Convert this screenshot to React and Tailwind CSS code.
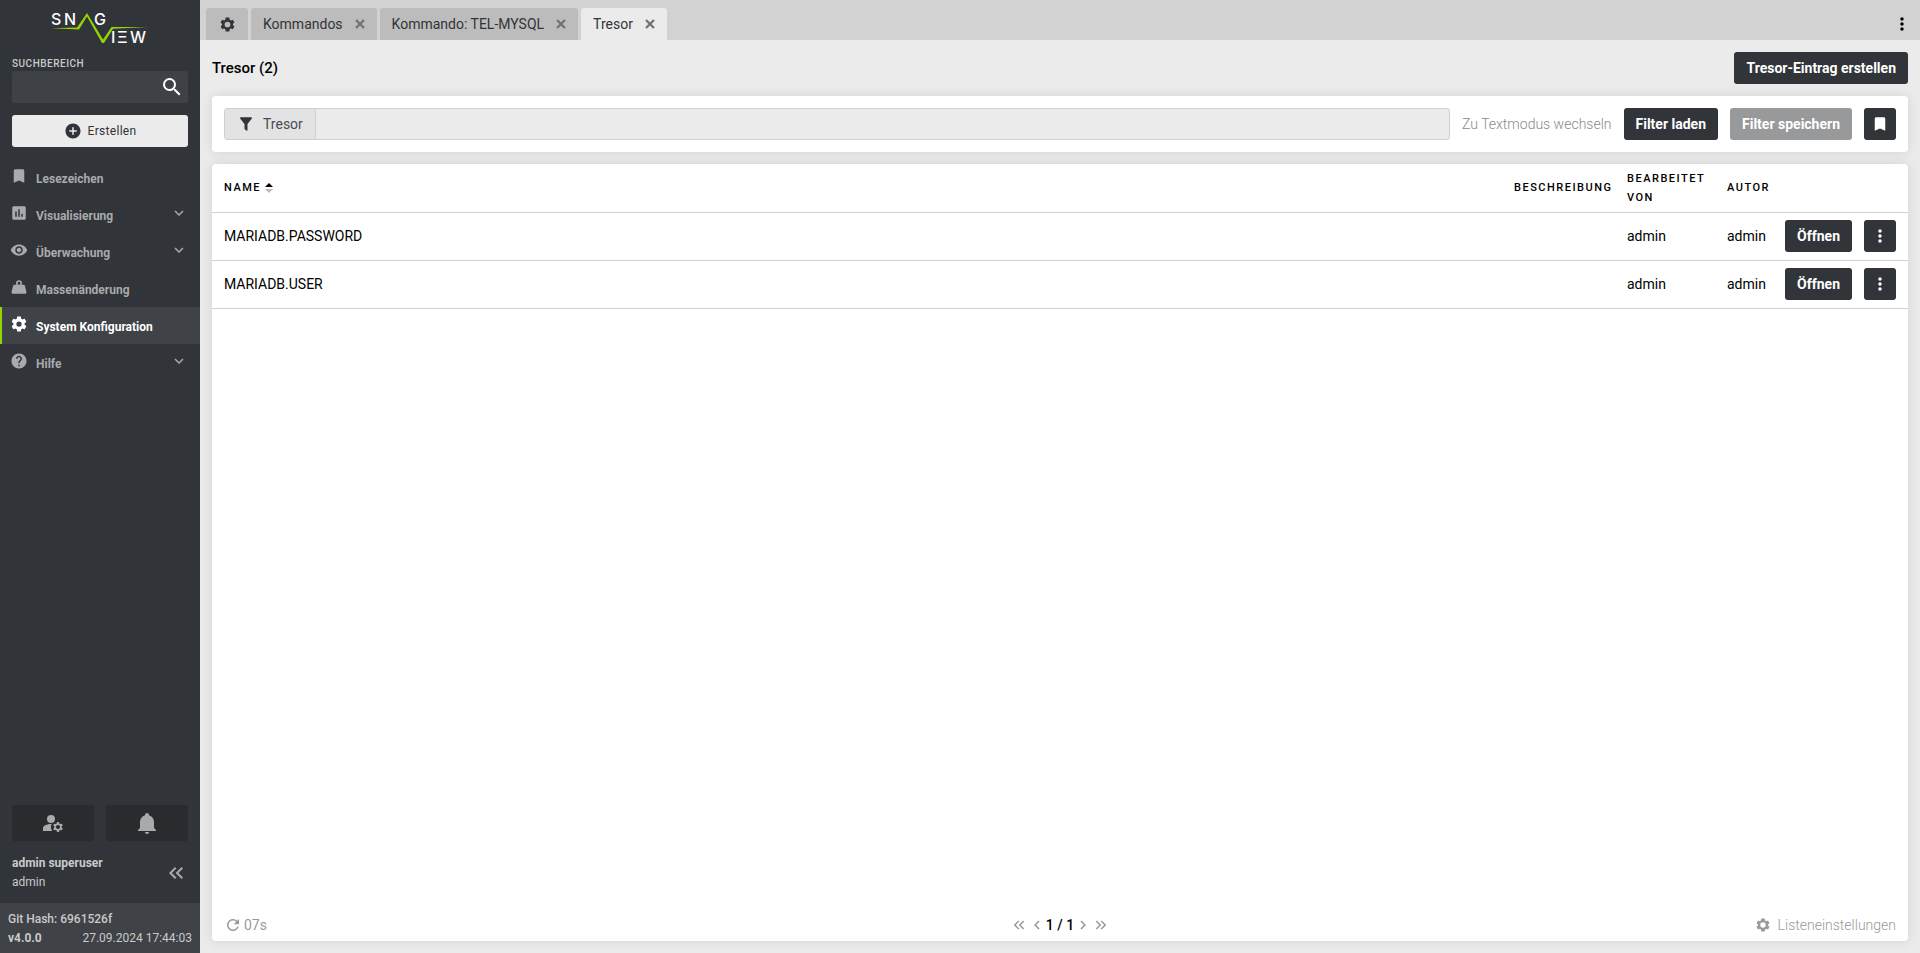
import React, { useState } from 'react';
import {
    MdAddCircle,
    MdBookmark,
    MdChevronLeft,
    MdChevronRight,
    MdHelp,
    MdInsertChart,
    MdKeyboardArrowDown,
    MdKeyboardDoubleArrowLeft,
    MdKeyboardDoubleArrowRight,
    MdManageAccounts,
    MdMoreVert,
    MdRefresh,
    MdSearch,
    MdVisibility,
} from 'react-icons/md';

const navItems = [
    { label: 'Lesezeichen', icon: MdBookmark },
    { label: 'Visualisierung', icon: MdInsertChart, expandable: true },
    { label: 'Überwachung', icon: MdVisibility, expandable: true },
    { label: 'Massenänderung', icon: WeightIcon },
    { label: 'System Konfiguration', icon: CogIcon, active: true },
    { label: 'Hilfe', icon: MdHelp, expandable: true },
];

const tabs = [
    { label: 'Kommandos' },
    { label: 'Kommando: TEL-MYSQL' },
    { label: 'Tresor', active: true },
];

const entries = [
    { name: 'MARIADB.PASSWORD', description: '', editedBy: 'admin', author: 'admin' },
    { name: 'MARIADB.USER', description: '', editedBy: 'admin', author: 'admin' },
];

function CogIcon({ className }) {
    return (
        <svg viewBox="0 0 24 24" fill="currentColor" className={className} aria-hidden="true">
            <path d="M12,15.5A3.5,3.5 0 0,1 8.5,12A3.5,3.5 0 0,1 12,8.5A3.5,3.5 0 0,1 15.5,12A3.5,3.5 0 0,1 12,15.5M19.43,12.97C19.47,12.65 19.5,12.33 19.5,12C19.5,11.67 19.47,11.34 19.43,11L21.54,9.37C21.73,9.22 21.78,8.95 21.66,8.73L19.66,5.27C19.54,5.05 19.27,4.96 19.05,5.05L16.56,6.05C16.04,5.66 15.5,5.32 14.87,5.07L14.5,2.42C14.46,2.18 14.25,2 14,2H10C9.75,2 9.54,2.18 9.5,2.42L9.13,5.07C8.5,5.32 7.96,5.66 7.44,6.05L4.95,5.05C4.73,4.96 4.46,5.05 4.34,5.27L2.34,8.73C2.21,8.95 2.27,9.22 2.46,9.37L4.57,11C4.53,11.34 4.5,11.67 4.5,12C4.5,12.33 4.53,12.65 4.57,12.97L2.46,14.63C2.27,14.78 2.21,15.05 2.34,15.27L4.34,18.73C4.46,18.95 4.73,19.03 4.95,18.95L7.44,17.94C7.96,18.34 8.5,18.68 9.13,18.93L9.5,21.58C9.54,21.82 9.75,22 10,22H14C14.25,22 14.46,21.82 14.5,21.58L14.87,18.93C15.5,18.67 16.04,18.34 16.56,17.94L19.05,18.95C19.27,19.03 19.54,18.95 19.66,18.73L21.66,15.27C21.78,15.05 21.73,14.78 21.54,14.63L19.43,12.97Z" />
        </svg>
    );
}

// Cog with a wide hole
function CogRingIcon({ className }) {
    return (
        <svg viewBox="1 1 22 22" fill="currentColor" fillRule="evenodd" className={className} aria-hidden="true">
            <path d="M12,16.2A4.2,4.2 0 0,1 7.8,12A4.2,4.2 0 0,1 12,7.8A4.2,4.2 0 0,1 16.2,12A4.2,4.2 0 0,1 12,16.2M20,12.97L20,11L22.2,9.4L19.9,5L16.9,6.05L15.3,5.07L14.6,1.6H9.4L8.7,5.07L7.1,6.05L4.1,5L1.8,9.4L4,11L4,12.97L1.8,14.6L4.1,19L7.1,17.94L8.7,18.93L9.4,22.4H14.6L15.3,18.93L16.9,17.94L19.9,19L22.2,14.6L20,12.97Z" />
        </svg>
    );
}

function WeightIcon({ className }) {
    return (
        <svg viewBox="0 0 24 24" fill="currentColor" className={className} aria-hidden="true">
            <path d="M12,3A4,4 0 0,1 16,7C16,7.73 15.81,8.41 15.46,9H18C18.95,9 19.75,9.67 19.95,10.56C21.96,18.57 22,18.78 22,19A2,2 0 0,1 20,21H4A2,2 0 0,1 2,19C2,18.78 2.04,18.57 4.05,10.56C4.25,9.67 5.05,9 6,9H8.54C8.19,8.41 8,7.73 8,7A4,4 0 0,1 12,3M12,5A2,2 0 0,0 10,7A2,2 0 0,0 12,9A2,2 0 0,0 14,7A2,2 0 0,0 12,5Z" />
        </svg>
    );
}

function BellIcon({ className }) {
    return (
        <svg viewBox="0 0 24 24" fill="currentColor" className={className} aria-hidden="true">
            <path d="M21,19V20H3V19L5,17V11C5,7.9 7.03,5.17 10,4.29C10,4.19 10,4.1 10,4A2,2 0 0,1 12,2A2,2 0 0,1 14,4C14,4.1 14,4.19 14,4.29C16.97,5.17 19,7.9 19,11V17L21,19M14,21A2,2 0 0,1 12,23A2,2 0 0,1 10,21" />
        </svg>
    );
}

function FilterIcon({ className }) {
    return (
        <svg viewBox="0 0 24 24" fill="currentColor" className={className} aria-hidden="true">
            <path d="M14,12V19.88C14.04,20.18 13.94,20.5 13.71,20.71C13.32,21.1 12.69,21.1 12.3,20.71L10.29,18.7C10.06,18.47 9.96,18.16 10,17.87V12H9.97L4.21,4.62C3.87,4.19 3.95,3.56 4.38,3.22C4.57,3.08 4.78,3 5,3H19C19.22,3 19.43,3.08 19.62,3.22C20.05,3.56 20.13,4.19 19.79,4.62L14.03,12H14Z" />
        </svg>
    );
}

function CloseIcon({ className }) {
    return (
        <svg viewBox="0 0 10 10" fill="none" stroke="currentColor" strokeWidth="2.2" className={className} aria-hidden="true">
            <path d="M1 1L9 9M9 1L1 9" />
        </svg>
    );
}

function SortIcon() {
    return (
        <svg viewBox="0 0 8 10" className="w-2 h-[10px]" aria-hidden="true">
            <path d="M0 4L4 0L8 4Z" fill="#000" />
            <path d="M0 6L4 10L8 6Z" fill="#bdbdbd" />
        </svg>
    );
}

function Logo() {
    return (
        <svg viewBox="0 0 98 38" className="w-[98px] h-[38px] overflow-visible" role="img" aria-label="SnagView">
            <g fill="#fff" fontFamily="Inter, sans-serif" fontSize="16" fontWeight="500">
                <text x="0" y="15">S</text>
                <text x="13" y="15">N</text>
                <text x="43" y="15">G</text>
                <text x="60" y="33">I</text>
                <text x="66" y="33">Ξ</text>
                <text x="79" y="33">W</text>
            </g>
            <path d="M0 18.3L26 17.6L36 3L52 29.5L60.5 17H97L62 18.8L53 33H51L36 6.5L28 19.4Z" fill="#93d500" />
        </svg>
    );
}

function Sidebar() {
    return (
        <aside className="flex w-[200px] shrink-0 flex-col bg-[#313439] text-[#c9cacb]">
            <div className="flex justify-center pt-[10px]">
                <Logo />
            </div>
            <div className="px-3 pt-2">
                <label htmlFor="search" className="block text-[10px] leading-[15px] font-medium tracking-wider">SUCHBEREICH</label>
                <div className="flex h-8 items-center rounded-[3px] bg-[#3e4146]">
                    <input id="search" type="text" className="min-w-0 flex-1 bg-transparent px-2 text-sm text-white outline-none" />
                    <button aria-label="Suchen" className="px-1 text-white">
                        <MdSearch className="size-6" />
                    </button>
                </div>
                <button className="mt-3 flex h-8 w-full items-center justify-center gap-1.5 rounded-[3px] bg-[#ebebeb] text-[12px] text-[#313439]">
                    <MdAddCircle className="size-[18px]" />
                    <span className="tracking-wide">Erstellen</span>
                </button>
            </div>
            <nav className="mt-3">
                {navItems.map(({ label, icon: Icon, expandable, active }) => (
                    <a
                        key={label}
                        href="#"
                        className={`flex h-[37px] items-center border-l-2 pr-3 pl-2 text-[12px] font-bold ${active ? 'border-[#93d500] bg-[#3f4246] text-white' : 'border-transparent text-[#a9aaac]'}`}
                    >
                        <Icon className="mb-1 size-[18px]" />
                        <span className="ml-2 flex-1 pt-0.5">{label}</span>
                        {expandable && <MdKeyboardArrowDown className="mb-1 size-[18px]" />}
                    </a>
                ))}
            </nav>
            <div className="mt-auto grid grid-cols-2 gap-3 px-3 text-[#a9aaac]">
                <button aria-label="Benutzereinstellungen" className="flex h-9 items-center justify-center rounded-[3px] bg-[#292b2f]">
                    <MdManageAccounts className="size-6" />
                </button>
                <button aria-label="Benachrichtigungen" className="flex h-9 items-center justify-center rounded-[3px] bg-[#292b2f]">
                    <BellIcon className="size-6" />
                </button>
            </div>
            <div className="flex items-center justify-between px-3 pt-[13px] pb-[11px] text-[12px] leading-[19px]">
                <div>
                    <div className="font-bold">admin superuser</div>
                    <div>admin</div>
                </div>
                <button aria-label="Seitenleiste einklappen" className="text-[#a9aaac]">
                    <MdKeyboardDoubleArrowLeft className="size-6" />
                </button>
            </div>
            <div className="bg-[#3f4246] px-2 pt-[7px] pb-[5px] text-[12px] leading-[19px]">
                <div className="font-medium">Git Hash: 6961526f</div>
                <div className="flex justify-between">
                    <span className="font-bold">v4.0.0</span>
                    <span>27.09.2024 17:44:03</span>
                </div>
            </div>
        </aside>
    );
}

function TabBar() {
    return (
        <div className="flex h-10 items-end gap-[3px] bg-[#d2d2d2] pr-2 pl-1.5">
            <button aria-label="Einstellungen" className="flex h-8 w-[42px] items-center justify-center rounded-t-[3px] bg-[#bcbcbc] text-[#313439]">
                <CogRingIcon className="size-[15px]" />
            </button>
            {tabs.map(({ label, active }) => (
                <div
                    key={label}
                    className={`flex h-8 items-center rounded-t-[3px] px-3 text-sm text-[#313439] ${active ? 'bg-[#ebebeb]' : 'bg-[#bcbcbc]'}`}
                >
                    <a href="#">{label}</a>
                    <button aria-label={`${label} schließen`} className="pl-3 text-[#6f7072]">
                        <CloseIcon className="size-[10px]" />
                    </button>
                </div>
            ))}
            <button aria-label="Mehr" className="ml-auto flex h-8 items-center">
                <MdMoreVert className="size-5" />
            </button>
        </div>
    );
}

function DarkButton({ children, square, ...props }) {
    return (
        <button
            className={`flex h-8 shrink-0 items-center justify-center rounded-[3px] bg-[#313439] text-sm font-bold whitespace-nowrap text-white disabled:bg-[#98999b] ${square ? 'w-8' : 'px-3'}`}
            {...props}
        >
            {children}
        </button>
    );
}

function FilterBar() {
    const [query, setQuery] = useState('');

    return (
        <div className="flex items-center gap-3 rounded bg-white p-3 shadow-[0_0_12px_rgba(0,0,0,0.1)]">
            <div className="flex h-8 flex-1 overflow-hidden rounded-[3px] border border-[#d0d0d0] bg-[#ebebeb]">
                <label htmlFor="filter" className="flex items-center gap-2 border-r border-[#d0d0d0] bg-[#e3e3e3] px-3 text-sm text-[#4a4c50]">
                    <FilterIcon className="size-[18px] text-[#313439]" />
                    Tresor
                </label>
                <input
                    id="filter"
                    type="text"
                    value={query}
                    onChange={(e) => setQuery(e.target.value)}
                    className="min-w-0 flex-1 bg-transparent px-2 text-sm outline-none"
                />
            </div>
            <button className="text-sm font-light text-[#8a8a8a]">Zu Textmodus wechseln</button>
            <DarkButton>Filter laden</DarkButton>
            <DarkButton disabled>Filter speichern</DarkButton>
            <DarkButton square aria-label="Lesezeichen setzen">
                <MdBookmark className="size-[18px]" />
            </DarkButton>
        </div>
    );
}

function EntryTable() {
    return (
        <table className="w-full table-fixed text-left text-sm">
            <thead>
                <tr className="h-12 border-b border-[#d0d0d0] text-[11px] leading-[19px] tracking-[1.5px]">
                    <th className="pl-3 font-medium">
                        <span className="flex items-center gap-1">NAME <SortIcon /></span>
                    </th>
                    <th className="w-[113px] font-medium">BESCHREIBUNG</th>
                    <th className="w-[100px] pr-4 font-medium">BEARBEITET VON</th>
                    <th className="w-[57px] font-medium">AUTOR</th>
                    <th className="w-[124px]"></th>
                </tr>
            </thead>
            <tbody>
                {entries.map((entry) => (
                    <tr key={entry.name} className="h-12 border-b border-[#d0d0d0]">
                        <td className="pl-3">{entry.name}</td>
                        <td>{entry.description}</td>
                        <td>{entry.editedBy}</td>
                        <td>{entry.author}</td>
                        <td className="pr-3">
                            <div className="flex justify-end gap-3">
                                <DarkButton>Öffnen</DarkButton>
                                <DarkButton square aria-label="Aktionen">
                                    <MdMoreVert className="size-5" />
                                </DarkButton>
                            </div>
                        </td>
                    </tr>
                ))}
            </tbody>
        </table>
    );
}

function ListFooter() {
    return (
        <div className="mt-auto grid grid-cols-3 items-center px-3 pb-1.5 text-sm text-[#9a9a9a]">
            <div className="flex items-center gap-0.5">
                <MdRefresh className="size-[18px]" />
                07s
            </div>
            <div className="flex items-center justify-center">
                <button aria-label="Erste Seite"><MdKeyboardDoubleArrowLeft className="size-[18px]" /></button>
                <button aria-label="Vorherige Seite"><MdChevronLeft className="size-[18px]" /></button>
                <span className="font-medium text-black">1 / 1</span>
                <button aria-label="Nächste Seite"><MdChevronRight className="size-[18px]" /></button>
                <button aria-label="Letzte Seite"><MdKeyboardDoubleArrowRight className="size-[18px]" /></button>
            </div>
            <button className="flex items-center gap-2 justify-self-end font-light">
                <CogRingIcon className="size-[14px]" />
                Listeneinstellungen
            </button>
        </div>
    );
}

function App() {
    return (
        <div className="flex min-h-screen bg-[#ebebeb] font-['Roboto',sans-serif] text-black">
            <Sidebar />
            <div className="flex min-w-0 flex-1 flex-col">
                <TabBar />
                <main className="flex flex-1 flex-col gap-3 p-3">
                    <div className="flex items-center justify-between">
                        <h1 className="text-[15px] font-medium">Tresor (2)</h1>
                        <DarkButton>Tresor-Eintrag erstellen</DarkButton>
                    </div>
                    <FilterBar />
                    <section className="flex flex-1 flex-col rounded bg-white shadow-[0_0_12px_rgba(0,0,0,0.1)]">
                        <EntryTable />
                        <ListFooter />
                    </section>
                </main>
            </div>
        </div>
    );
}

export default App;
